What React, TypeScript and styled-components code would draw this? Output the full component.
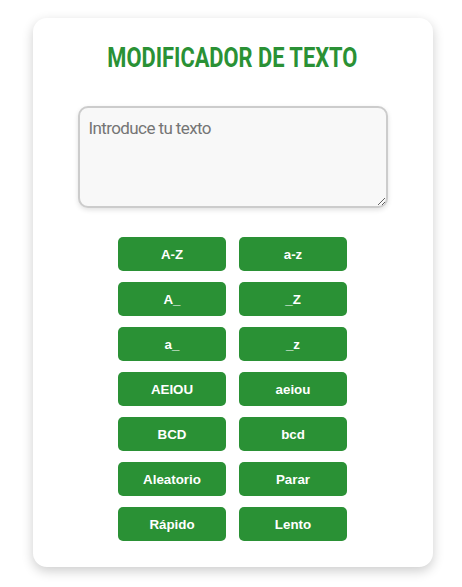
import React from "react";
import styled, { createGlobalStyle } from "styled-components";

const Global = createGlobalStyle`
  html, body { margin: 0; padding: 0; background: #ffffff; }
  body { font-family: "Liberation Sans", Arial, sans-serif; }
`;

const Page = styled.div`
  display: flex;
  justify-content: center;
  padding: 18px 0 20px 3px;
`;

const Card = styled.div`
  width: 400px;
  box-sizing: border-box;
  background: #ffffff;
  border-radius: 14px;
  box-shadow: 0 4px 12px rgba(0, 0, 0, 0.2);
  display: flex;
  flex-direction: column;
  align-items: center;
  padding: 22px 0 26px;
`;

const Title = styled.h1`
  margin: 0;
  font-family: Roboto, "Noto Sans", sans-serif;
  font-weight: 700;
  font-size: 28px;
  line-height: 36px;
  color: #2a9135;
  white-space: nowrap;
  display: inline-block;
  transform: scaleX(0.78);
`;

const TextArea = styled.textarea`
  margin-top: 30px;
  width: 310px;
  height: 102px;
  box-sizing: border-box;
  border: 2px solid #cccccc;
  border-radius: 10px;
  background: #f8f8f8;
  box-shadow: 0 2px 5px rgba(0, 0, 0, 0.12);
  padding: 10px 9px;
  font-family: Roboto, sans-serif;
  font-size: 17px;
  letter-spacing: -0.6px;
  color: #333;
  outline: none;
  &::placeholder {
    color: #757575;
  }
`;

const Grid = styled.div`
  margin-top: 29px;
  display: grid;
  grid-template-columns: 108px 108px;
  column-gap: 13px;
  row-gap: 11px;
`;

const Button = styled.button`
  height: 34px;
  border: none;
  border-radius: 5px;
  background: #2a9135;
  color: #ffffff;
  font-family: "Liberation Sans", Arial, sans-serif;
  font-weight: 700;
  font-size: 13.333px;
  cursor: pointer;
  padding: 0;
`;

const labels = [
  "A-Z", "a-z",
  "A_", "_Z",
  "a_", "_z",
  "AEIOU", "aeiou",
  "BCD", "bcd",
  "Aleatorio", "Parar",
  "Rápido", "Lento",
];

export default function App() {
  return (
    <>
      <Global />
      <Page>
        <Card>
          <Title>MODIFICADOR DE TEXTO</Title>
          <TextArea placeholder="Introduce tu texto" />
          <Grid>
            {labels.map((l) => (
              <Button key={l}>{l}</Button>
            ))}
          </Grid>
        </Card>
      </Page>
    </>
  );
}
